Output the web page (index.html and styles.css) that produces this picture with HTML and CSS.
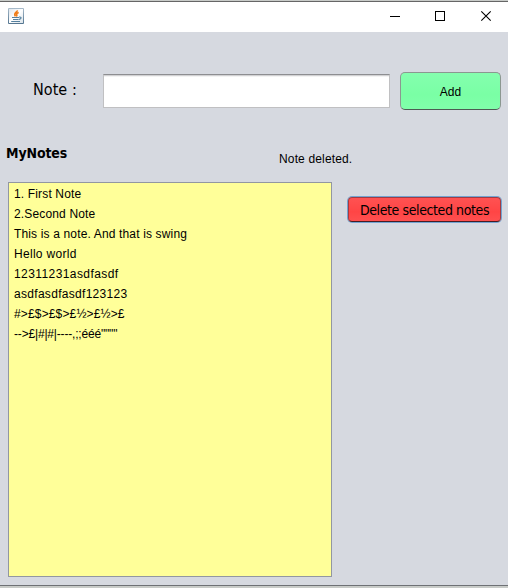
FILE: index.html
```html
<!DOCTYPE html>
<html lang="en">
<head>
<meta charset="utf-8">
<title>MyNotes</title>
<link rel="stylesheet" href="styles.css">
</head>
<body>
<div class="window">
  <header class="titlebar">
    <svg class="app-icon" width="16" height="16" viewBox="0 0 16 16">
      <defs>
        <linearGradient id="tile" x1="0" y1="0" x2="0" y2="1"><stop offset="0" stop-color="#a9bccb"/><stop offset="1" stop-color="#52748f"/></linearGradient>
        <linearGradient id="face" x1="0" y1="0" x2="1" y2="1"><stop offset="0" stop-color="#dfe6ec"/><stop offset=".5" stop-color="#ffffff"/><stop offset="1" stop-color="#dbe3e9"/></linearGradient>
      </defs>
      <rect width="16" height="16" rx="1" fill="url(#tile)"/>
      <rect x="1" y="1" width="14" height="14" fill="url(#face)"/>
      <path d="M9.3 2.3C9.6 4.2 4.9 5 7.4 8.4M10.7 4.4C8.2 5.4 8.4 6.2 8.8 6.8 9.1 7.3 8.8 7.9 8.3 8.5" fill="none" stroke="#f07c18" stroke-width="1.6"/>
      <path d="M4 9.5H11M5 11.5H10.6M3.2 13.5H12M11 9C14 8.6 13.6 11 11 11.4" fill="none" stroke="#54809f" stroke-width="1.1"/>
    </svg>
    <div class="controls">
      <svg width="46" height="30" viewBox="0 0 46 30"><path d="M16 14.5H26" stroke="#000"/></svg>
      <svg width="46" height="30" viewBox="0 0 46 30"><rect x="15.5" y="9.5" width="9" height="9" fill="none" stroke="#000"/></svg>
      <svg width="46" height="30" viewBox="0 0 46 30"><path d="M15.3 9.3L24.7 18.7M24.7 9.3L15.3 18.7" stroke="#000" stroke-width="1.1"/></svg>
    </div>
  </header>
  <main class="content">
    <div class="entry">
      <label class="note-label" for="note">Note :</label>
      <input class="note-input" id="note" type="text">
      <button class="add">Add</button>
    </div>
    <div class="heading">
      <h1 class="title">MyNotes</h1>
      <p class="status">Note deleted.</p>
    </div>
    <div class="notes">
      <ul class="list">
        <li>1. First Note</li>
        <li>2.Second Note</li>
        <li>This is a note. And that is swing</li>
        <li class="loose">Hello world</li>
        <li class="looser">12311231asdfasdf</li>
        <li class="loose">asdfasdfasdf123123</li>
        <li>#&gt;£$&gt;£$&gt;£½&gt;£½&gt;£</li>
        <li class="tight">--&gt;£|#|#|----,;;ééé""""</li>
      </ul>
      <button class="delete">Delete selected notes</button>
    </div>
  </main>
</div>
</body>
</html>
```
FILE: styles.css
```css
* { box-sizing: border-box; }
body {
  margin: 0;
  width: 508px;
  height: 588px;
  padding: 1px 0 2px;
  overflow: hidden;
  background: #c8cbc8;
  color: #000;
  font: 12px/20px "Liberation Sans", sans-serif;
}
.window {
  display: flex;
  flex-direction: column;
  height: 585px;
  border-top: 1px solid #666;
  border-bottom: 1px solid #6e7175;
  background: #d6d9e0;
}
.titlebar {
  display: flex;
  justify-content: space-between;
  height: 30px;
  padding-left: 8px;
  background: #fff;
}
.app-icon { margin-top: 6px; }
.controls { display: flex; margin-right: -4px; }
.content { flex: 1; padding: 40px 7px 8px 8px; }
.entry { display: flex; align-items: flex-start; height: 38px; }
.note-label {
  width: 95px;
  padding: 8px 0 0 25px;
  font: 16px/20px "DejaVu Sans Condensed", "DejaVu Sans", sans-serif;
  font-stretch: condensed;
  letter-spacing: .05px;
  white-space: nowrap;
}
.note-input {
  width: 287px;
  height: 34px;
  margin: 2px 10px 0 0;
  padding: 0 6px;
  border: 1px solid #c0c0c2;
  border-top-color: #8d8e91;
  border-radius: 0;
  background: #fff;
  box-shadow: inset 0 1px #d2d2d4, inset 0 2px #f3f3f3;
  outline: none;
}
button { padding: 0; color: #000; font: inherit; }
.add {
  width: 101px;
  height: 38px;
  padding-top: 1px;
  border: 1px solid #8b9790;
  border-bottom-color: #4d5b53;
  border-radius: 5px;
  background: linear-gradient(#84ffae, #7affa5 60%, #80ffaa);
}
.heading { display: flex; height: 72px; }
.title {
  width: 271px;
  margin: 33px 0 0 -2px;
  font: bold 14px/20px "DejaVu Sans Condensed", "DejaVu Sans", sans-serif;
  font-stretch: condensed;
  letter-spacing: -.12px;
}
.status { margin: 39px 0 0 2px; letter-spacing: .15px; }
.notes { display: flex; align-items: flex-start; gap: 16px; }
.list {
  width: 324px;
  height: 395px;
  margin: 0;
  padding: 1px 5px;
  border: 1px solid #9297a1;
  background: #ff9;
  letter-spacing: .15px;
  list-style: none;
}
.loose { letter-spacing: .3px; }
.looser { letter-spacing: .42px; }
.tight { letter-spacing: -.18px; }
.delete {
  width: 153px;
  height: 25px;
  margin-top: 15px;
  border: 1px solid #a33b42;
  border-bottom-color: #461c24;
  border-radius: 4px;
  background: linear-gradient(#ff5252, #ff4545 60%, #ff4f4f);
  box-shadow: 0 0 0 1px #73a4d1;
  font: 14px/20px "DejaVu Sans Condensed", "DejaVu Sans", sans-serif;
  font-stretch: condensed;
  letter-spacing: -.4px;
  white-space: nowrap;
}
```
